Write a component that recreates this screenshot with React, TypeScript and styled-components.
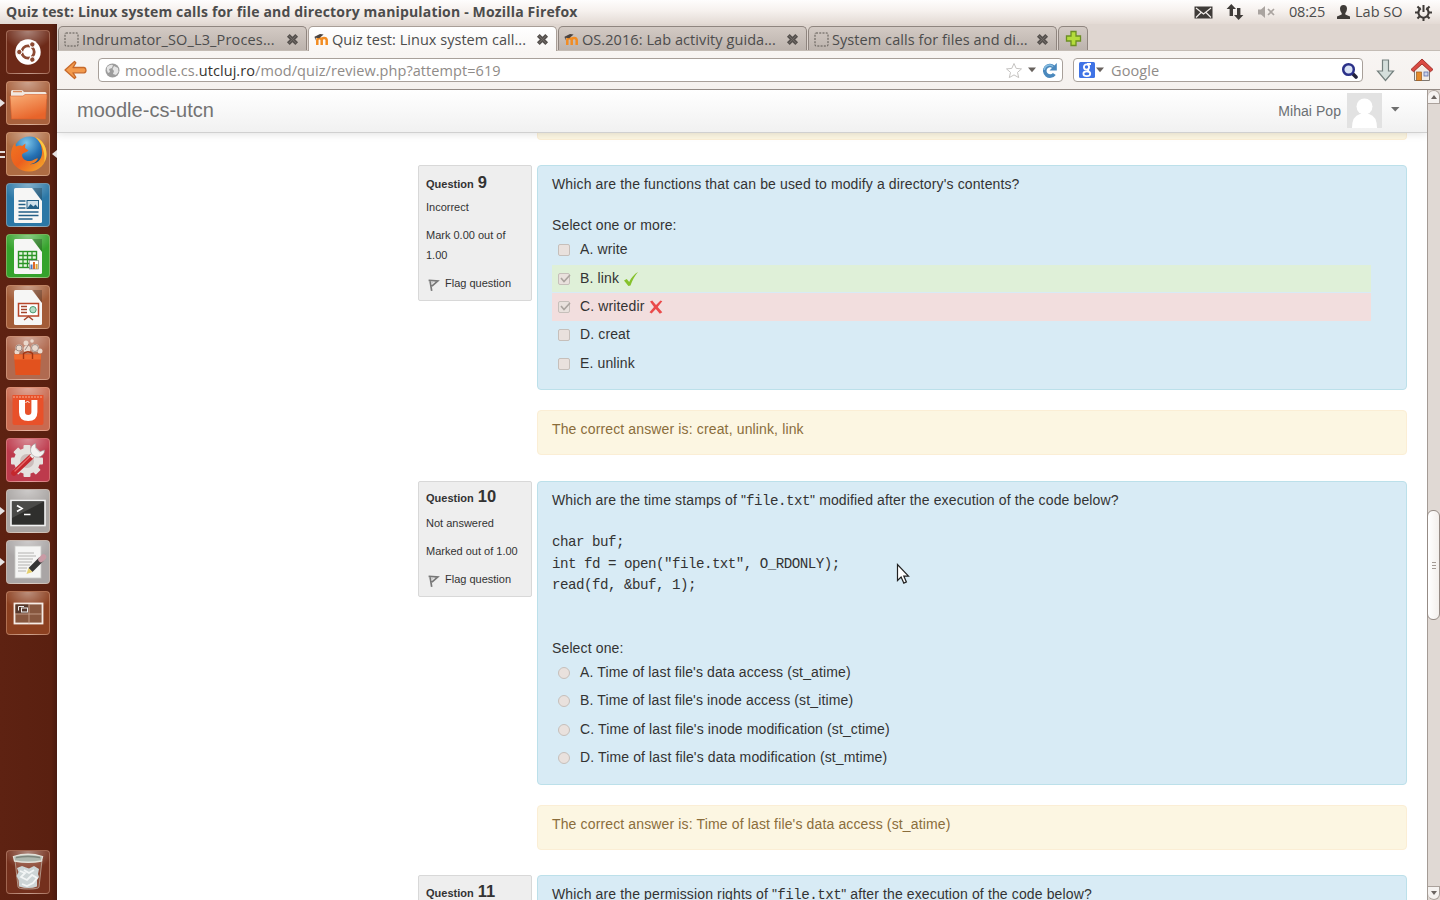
import React from 'react';
import styled, { createGlobalStyle } from 'styled-components';

const GlobalStyle = createGlobalStyle`
  * { box-sizing: border-box; }
  html, body, #root { height: 100%; margin: 0; }
  body { overflow: hidden; background: #fff; color: #333; font-family: "Liberation Sans", Arial, sans-serif; font-size: 14px; }
`;

const Desktop = styled.div`
  position: relative;
  width: 1440px;
  height: 900px;
  display: flex;
  flex-direction: column;
  overflow: hidden;
`;

const UiText = styled.span<{ $ls?: number; $size?: number; $color?: string; $bold?: boolean }>`
  font-family: "Open Sans", "Noto Sans", sans-serif;
  font-size: ${p => p.$size ?? 14.5}px;
  font-weight: ${p => (p.$bold ? 700 : 400)};
  letter-spacing: ${p => p.$ls ?? 0}px;
  color: ${p => p.$color ?? '#4c4c4c'};
  white-space: pre;
  line-height: 20px;
`;

const Panel = styled.header`
  height: 24px;
  flex: none;
  display: flex;
  align-items: center;
  padding: 0 8px 0 6px;
  background: linear-gradient(#fefdfd, #f6f1ee 45%, #e3dad4);
  svg { display: block; }
`;

const Indicators = styled.div`
  margin-left: auto;
  display: flex;
  align-items: center;
`;

const Slot = styled.span<{ $w: number }>`
  width: ${p => p.$w}px;
  display: flex;
  align-items: center;
  flex: none;
`;

const Body = styled.div`
  flex: 1;
  display: flex;
  min-height: 0;
`;

const Launcher = styled.nav`
  width: 57px;
  flex: none;
  display: flex;
  flex-direction: column;
  gap: 7px;
  padding: 6px 0 6px 6px;
  background: linear-gradient(90deg, #5e2212, #5a2010 90%, #4a1a10);
`;

const Tile = styled.div<{ $bg: string; $last?: boolean }>`
  position: relative;
  width: 44px;
  height: 44px;
  flex: none;
  border-radius: 4px;
  border: 1px solid rgba(255, 215, 190, 0.32);
  background: radial-gradient(ellipse 60% 45% at 50% 0, rgba(255,255,255,.42), transparent), ${p => p.$bg};
  margin-top: ${p => (p.$last ? 'auto' : 0)};
  > svg { display: block; width: 42px; height: 42px; }
`;

const Running = styled.i<{ $side: 'left' | 'right' }>`
  position: absolute;
  top: 17px;
  ${p => (p.$side === 'left' ? 'left: -7px; border-left: 5px solid #e6e2e2;' : 'right: -8px; border-right: 5px solid #e6e2e2;')}
  border-top: 4px solid transparent;
  border-bottom: 4px solid transparent;
`;

const TwoRunning = styled.i`
  position: absolute;
  top: 18px;
  left: -7px;
  width: 5px;
  height: 7px;
  border-top: 2px solid #e6dedc;
  border-bottom: 2px solid #e6dedc;
`;

const Browser = styled.div`
  flex: 1;
  min-width: 0;
  display: flex;
  flex-direction: column;
`;

const TabStrip = styled.div`
  height: 27px;
  flex: none;
  display: flex;
  align-items: flex-end;
  gap: 1px;
  padding-left: 1px;
  background: #dfd6d0;
  border-bottom: 1px solid #c4bcb5;
`;

const Tab = styled.div<{ $active?: boolean }>`
  width: 249px;
  height: ${p => (p.$active ? 25 : 24)}px;
  margin-bottom: ${p => (p.$active ? -1 : 0)}px;
  display: flex;
  align-items: center;
  padding: 1px 7px 0 5px;
  border: 1px solid ${p => (p.$active ? '#a89e97' : '#8f857f')};
  border-bottom: 0;
  border-radius: 5px 5px 0 0;
  background: ${p => (p.$active ? 'linear-gradient(#fff, #f8f5f3)' : 'linear-gradient(#d3cac4, #bcb3ad)')};
  svg { flex: none; }
  > svg:last-child { margin-left: auto; }
`;

const TabTitle = styled(UiText)`
  margin: 1px 0 0 3px;
`;

const NewTab = styled(Tab)`
  width: 30px;
  padding: 0 0 0 6px;
  > svg:last-child { margin-left: 0; }
`;

const NavBar = styled.div`
  height: 39px;
  flex: none;
  display: flex;
  align-items: center;
  padding: 0 6px 0 7px;
  background: linear-gradient(#f8f5f3, #f5f1ee);
  border-bottom: 1px solid #948b86;
  svg { display: block; flex: none; }
`;

const Field = styled.div<{ $w: number; $ml: number }>`
  width: ${p => p.$w}px;
  height: 24px;
  margin-left: ${p => p.$ml}px;
  display: flex;
  align-items: center;
  background: #fff;
  border: 1px solid #a8a09a;
  border-radius: 4px;
  padding: 0 4px 0 5px;
  > svg:first-child { margin-top: 1px; }
`;

const FieldText = styled(UiText)`
  margin: 2px 0 0 4px;
`;

const Push = styled.span`
  margin-left: auto;
  display: flex;
  align-items: center;
  gap: 5px;
`;

const Viewport = styled.div`
  flex: 1;
  min-height: 0;
  display: flex;
`;

const Page = styled.main`
  flex: 1;
  min-width: 0;
  display: flex;
  flex-direction: column;
  overflow: hidden;
  background: #fff;
`;

const SiteBar = styled.div`
  position: relative;
  height: 43px;
  flex: none;
  display: flex;
  align-items: center;
  padding: 0 26px 1px 20px;
  background: linear-gradient(#fff, #f1f1f1);
  border-bottom: 1px solid #d0d0d0;
  box-shadow: 0 1px 8px rgba(0, 0, 0, 0.12);
`;

const Brand = styled.span`
  font-size: 20px;
  color: #737373;
  letter-spacing: 0.02px;
`;

const User = styled.span`
  margin-left: auto;
  display: flex;
  align-items: center;
  gap: 6px;
  color: #6b6f73;
  letter-spacing: 0.05px;
  svg { display: block; }
  > svg:last-child { margin: -2px 0 0 1px; }
`;

const Content = styled.div`
  padding: 0 20px 0 361px;
  display: flex;
  flex-direction: column;
`;

const Tail = styled.div`
  height: 7px;
  flex: none;
  margin: 0 0 25px 119px;
  background: #fcf6e2;
  border: 1px solid #fbeed5;
  border-top: 0;
  border-radius: 0 0 4px 4px;
`;

const QuestionRow = styled.section`
  display: grid;
  grid-template-columns: 114px 870px;
  column-gap: 5px;
  align-items: start;
  flex: none;
`;

const Info = styled.aside<{ $h: number }>`
  height: ${p => p.$h}px;
  padding: 7px 7px 0;
  background: #eeeeee;
  border: 1px solid #d8d8d8;
  border-radius: 2px;
  font-size: 11px;
  line-height: 20px;
  white-space: nowrap;
`;

const Number = styled.h3<{ $up: number }>`
  margin: ${p => -p.$up}px 0 ${p => 6 + p.$up}px;
  height: 18px;
  line-height: 18px;
  font-size: 11px;
  b { font-size: 16.5px; margin-left: 1px; }
`;

const InfoLine = styled.div`
  margin-bottom: 7.6px;
  white-space: pre-line;
`;

const Flag = styled.div`
  display: flex;
  align-items: center;
  gap: 5px;
  padding-top: 0.5px;
  svg { display: block; margin: 4px 0 0 1px; }
`;

const Formulation = styled.div<{ $h: number }>`
  height: ${p => p.$h}px;
  padding: 8px 35px 0 14px;
  background: #d8ebf5;
  border: 1px solid #bce0ea;
  border-radius: 4px;
  line-height: 20px;
  letter-spacing: 0.13px;
`;

const Stem = styled.div`
  code { font: 14.2px/20px "Liberation Mono", monospace; letter-spacing: -0.52px; }
`;

const Code = styled.pre`
  margin: 20px 0 41px;
  padding-top: 1px;
  font: 14.2px/21.5px "Liberation Mono", monospace;
  letter-spacing: -0.52px;
`;

const Prompt = styled.div`
  margin-top: 21px;
`;

const Answers = styled.div<{ $pad: number }>`
  padding-top: ${p => p.$pad}px;
`;

const Answer = styled.div<{ $tone?: 'right' | 'wrong' }>`
  height: 27.4px;
  margin-bottom: 1px;
  display: flex;
  align-items: center;
  padding-left: 6px;
  background: ${p => (p.$tone === 'right' ? '#dff0d8' : p.$tone === 'wrong' ? '#f2dede' : 'transparent')};
  span { margin: -2px 4px 0 10px; }
  svg { display: block; }
`;

const Box = styled.i<{ $round?: boolean }>`
  width: 12px;
  height: 12px;
  display: block;
  border: 1px solid #c6bfba;
  border-radius: ${p => (p.$round ? '50%' : '2px')};
  background: #e9e1dd;
  svg { margin: -1px 0 0 0; }
`;

const Outcome = styled.div<{ $gap?: number }>`
  height: 45px;
  flex: none;
  margin: 20px 0 ${p => p.$gap ?? 26}px 119px;
  padding: 8px 14px;
  line-height: 20px;
  letter-spacing: 0.14px;
  color: #8a6d3b;
  background: #fcf6e2;
  border: 1px solid #fbeed5;
  border-radius: 4px;
`;

const Scrollbar = styled.div`
  width: 13px;
  flex: none;
  display: flex;
  flex-direction: column;
  background: #e0d9d4;
  border-left: 1px solid #a49b95;
`;

const ScrollButton = styled.div<{ $h: number; $down?: boolean }>`
  height: ${p => p.$h}px;
  margin-top: ${p => (p.$down ? 'auto' : 0)};
  display: flex;
  align-items: center;
  justify-content: center;
  background: #f5f2f0;
  border: 1px solid #aaa19b;
  border-left: 0;
  border-radius: ${p => (p.$down ? '0 0 6px 6px' : '6px 6px 0 0')};
`;

const Thumb = styled.div`
  height: 110px;
  display: flex;
  flex-direction: column;
  align-items: center;
  justify-content: center;
  gap: 2px;
  margin-top: 406px;
  margin-left: -1px;
  border: 1px solid #958b85;
  border-radius: 6px;
  background: linear-gradient(90deg, #fff, #f3efec);
  i { width: 4px; height: 1px; background: #a39a94; }
`;

const Cursor = styled.svg`
  position: absolute;
  left: 896px;
  top: 563px;
`;

/* ---------- small icons ---------- */

const PageIcon = () => (
  <svg width="15" height="15" viewBox="0 0 15 15"><rect x="1" y="1" width="13" height="13" rx="1" fill="none" stroke="#5b5651" strokeDasharray="2 1.25" /></svg>
);

const MoodleIcon = () => (
  <svg width="15" height="15" viewBox="0 0 15 15">
    <path d="M3.3 13V8.2q0-2 2.2-2t2.2 2V13M7.7 8.2q0-2.2 2.4-2.2t2.6 2.2V13" fill="none" stroke="#f28c22" strokeWidth="2.5" />
    <path d="M.5 4.8 6 2l3.6.6-4.4 3.6-3.4-.5-.3 2.8z" fill="#4a4340" />
  </svg>
);

const CloseIcon = () => (
  <svg width="13" height="13" viewBox="0 0 13 13"><path d="m2.3 2.3 8.4 8.4m0-8.4-8.4 8.4" stroke="#57524f" strokeWidth="3.9" /><path d="m2.5 2.5 8 8m0-8-8 8" stroke="#706a66" strokeWidth="1" /></svg>
);

const Caret = ({ color = '#68625e', w = 8 }) => (
  <svg width={w} height="6" viewBox="0 0 8 6"><path d="M0 .5h8L4 5.3z" fill={color} /></svg>
);

const FlagIcon = () => (
  <svg width="13" height="14" viewBox="0 0 13 14"><path d="m1.600 2.300 9.200.7-5.900 5.200M3 2.600l1.700 10.200" fill="none" stroke="#777" strokeWidth="1.700" /><path d="m4 3.500 3 .3-2.300 2.400z" fill="#c9c9c9" /></svg>
);

const TickIcon = () => (
  <svg width="16" height="16" viewBox="0 0 16 16"><path d="M1 9.600 3.700 8l2.500 3C8.300 6.500 11.200 3.200 15 1c-3.300 3.800-5.700 8.400-7.500 13.600L5.400 15z" fill="#86c22c" /></svg>
);

const CrossIcon = () => (
  <svg width="16" height="16" viewBox="0 0 16 16"><path d="M2 2.500 4.200 1.500 8 6l4.500-4.500 1.800.8L9.700 7.900l4.600 5.300-2.500 1.600L7.800 10l-4.200 4.600-2.100-1.300L6 8z" fill="#ea4a4a" /></svg>
);

/* ---------- launcher drawings ---------- */

const Gear = ({ cx, cy, r, fill }: { cx: number; cy: number; r: number; fill: string }) => (
  <g fill={fill}>
    {[0, 45, 90, 135].map(a => (
      <rect key={a} x={cx - 3.5} y={cy - r - 3} width="7" height={(r + 3) * 2} rx="1" transform={`rotate(${a} ${cx} ${cy})`} />
    ))}
    <circle cx={cx} cy={cy} r={r} />
  </g>
);

const DashIcon = () => (
  <svg viewBox="0 0 42 42">
    <circle cx="21" cy="21" r="12.7" fill="#fff" />
    <circle cx="21" cy="21" r="6.2" fill="none" stroke="#8c4a33" strokeWidth="2.8" />
    {[60, 180, 300].map(a => (
      <g key={a} transform={`rotate(${a} 21 21)`}>
        <path d="M21 21h10" stroke="#fff" strokeWidth="1.2" />
        <circle cx="29.700" cy="21" r="2.700" fill="#8c4a33" stroke="#fff" strokeWidth="1" />
      </g>
    ))}
  </svg>
);

const FilesIcon = () => (
  <svg viewBox="0 0 42 42">
    <defs><linearGradient id="folder" x1="0" y1="0" x2=".5" y2="1"><stop offset="0" stopColor="#f9b078" /><stop offset="1" stopColor="#e8642a" /></linearGradient></defs>
    <path d="M4 9.500q0-1.500 1.500-1.500H15l2 2h21q1.500 0 1.500 1.500V17H4z" fill="#f1e8e0" />
    <path d="M6 9.500h9" stroke="#d98a5b" strokeWidth="1.500" />
    <path d="M3 14h13l2-1.500h22L38.500 37h-34z" fill="url(#folder)" stroke="#d9602c" strokeWidth=".6" />
  </svg>
);

const FirefoxIcon = () => (
  <svg viewBox="0 0 42 42">
    <defs>
      <radialGradient id="globe" cx=".4" cy=".2" r=".9"><stop offset="0" stopColor="#7cc6ea" /><stop offset=".5" stopColor="#2672b4" /><stop offset="1" stopColor="#123463" /></radialGradient>
      <linearGradient id="fox" x1="0" y1="0" x2="1" y2="1"><stop offset="0" stopColor="#f07a22" /><stop offset=".5" stopColor="#ec5f1e" /><stop offset="1" stopColor="#f6b32c" /></linearGradient>
    </defs>
    <circle cx="22.500" cy="19.500" r="16" fill="url(#globe)" />
    <path d="M28 4c7 2.500 11.500 9 11.500 17 0 10-7.500 17.500-17.500 17.500S4 31.500 4 22c0-5 1.500-9 4-12l1 3.500c2-1 4-1.200 6-.6l3.500-2.400-.5 4.500 3.500 2.500c-2 2-5 2-6.500 4 0 4 3 6.500 7 6.500 5 0 6-3 9-2.500-2 4-5 5.500-9 5.500 7 1 13-4 13-11.500C35 12 32 7 28 4z" fill="url(#fox)" />
    <path d="M28 4c7 2.500 11.500 9 11.500 17 0 3-.6 5.500-2 8 .3-7-.5-17-9.500-25z" fill="#f9c843" />
  </svg>
);

const Sheet = ({ children }: { children: React.ReactNode }) => (
  <svg viewBox="0 0 42 42">
    <path d="M26 4h9v14z" fill="rgba(0,0,0,.22)" />
    <path d="M7 5.500Q7 4 8.500 4H25l10 13v20.500q0 1.500-1.500 1.500h-25Q7 39 7 37.500z" fill="#f6f6f5" />
    {children}
  </svg>
);

const WriterIcon = () => (
  <Sheet>
    <path d="M11.500 17h7m-7 3.500h7m-7 3.500h7m-7 4h20m-20 3.500h20m-20 3.500h14" stroke="#245f86" strokeWidth="1.700" />
    <rect x="20" y="16.500" width="11.500" height="8" fill="#cfe0eb" stroke="#245f86" />
    <path d="m20.500 24 3-4 3 2.500 2-2 3 3.500z" fill="#245f86" />
  </Sheet>
);

const CalcIcon = () => (
  <Sheet>
    <rect x="11.500" y="16.500" width="18" height="16" fill="#e8f6e2" stroke="#2b9427" strokeWidth="1.400" />
    <path d="M11.500 20.500h18m-18 4h18m-18 4h18M16 16.500v16m4.500-16v16m4.500-16v16" stroke="#2b9427" strokeWidth="1.300" />
    <rect x="22.500" y="25.500" width="9" height="8.500" fill="#fff" stroke="#888" strokeWidth=".7" />
    <path d="M24.500 34v-4.500" stroke="#4b76b8" strokeWidth="2" /><path d="M27 34v-7" stroke="#e0692a" strokeWidth="2" /><path d="M29.600 34v-5" stroke="#dca334" strokeWidth="2" />
  </Sheet>
);

const ImpressIcon = () => (
  <Sheet>
    <rect x="11.500" y="17.500" width="20" height="12.500" fill="#fff" stroke="#b8462a" strokeWidth="1.500" />
    <path d="M14 20.500h6m-6 3h6m-6 3h6M17 34l4.500-3.500L26 34" fill="none" stroke="#a4452c" strokeWidth="1.500" />
    <circle cx="26" cy="23.700" r="3.200" fill="#b4dcc5" stroke="#4f9b73" />
  </Sheet>
);

const SoftwareIcon = () => (
  <svg viewBox="0 0 42 42">
    <g fill="#ead9cd"><circle cx="12" cy="11" r="3.500" /><circle cx="19" cy="6" r="2.500" /><circle cx="25" cy="4" r="1.800" /><circle cx="28" cy="11" r="4" /><circle cx="33" cy="14" r="2.500" /><circle cx="20" cy="12" r="3.500" /><circle cx="10" cy="15" r="2.500" /></g>
    <g fill="none" stroke="#9d8c86"><circle cx="12" cy="11" r="3" /><circle cx="28" cy="11" r="3.500" /><path d="m18 13 4-6" /></g>
    <path d="M7 17.500h27L33 38H8.500z" fill="#e2521e" /><path d="M7 17.500h27l-.3 5H7.300z" fill="#ef6c31" />
    <path d="M16.500 22v-5.500q4.500-3.500 9 0V22" fill="none" stroke="#a5340f" strokeWidth="1.400" />
  </svg>
);

const UbuntuOneIcon = () => (
  <svg viewBox="0 0 42 42">
    <path d="M5.500 7h31v28q0 2-2 2h-27q-2 0-2-2z" fill="#e8512a" /><path d="M6 9h30" stroke="#f7b095" strokeDasharray="2 1" />
    <path d="M15 12v12q0 6 6.200 6t6.200-6V12" fill="none" stroke="#fff" strokeWidth="6" />
    <path d="m18.500 15 2-2 2 2" fill="none" stroke="#fff" />
  </svg>
);

const SettingsIcon = () => (
  <svg viewBox="0 0 42 42">
    <Gear cx={20} cy={22} r={13} fill="#e5e2df" /><circle cx="20" cy="22" r="7" fill="#cbbdbb" />
    <path d="m7 34 17-16" stroke="#c4272d" strokeWidth="5.500" strokeLinecap="round" />
    <path d="m8 32 15-14.500" stroke="#e86b6a" strokeWidth="1.300" strokeLinecap="round" />
    <path d="m24 18 6-6" stroke="#e9e8e6" strokeWidth="4" />
    <path d="M28.500 4.500a7 7 0 1 0 9 6.500l-5 1.800-3.600-3.500z" fill="#f4f2f0" stroke="#999" strokeWidth=".6" />
  </svg>
);

const TerminalIcon = () => (
  <svg viewBox="0 0 42 42">
    <rect x="4" y="10.500" width="34" height="25" fill="#2f2f2d" stroke="#f2f2f2" strokeWidth="1.600" />
    <path d="M5 11.500h32L5 28z" fill="#4a4a48" />
    <path d="m10 15.500 5 3-5 3M17 24.500h6.500" fill="none" stroke="#fff" strokeWidth="1.700" />
  </svg>
);

const EditorIcon = () => (
  <svg viewBox="0 0 42 42">
    <rect x="8" y="5" width="26" height="32" fill="#f5f5f4" stroke="#c9c8c6" strokeWidth=".8" />
    <path d="M11 12h16m-16 3h18m-18 3h15m-15 3h14m-14 3h12m-12 3h9m-9 3h8" stroke="#b3b2b0" />
    <path d="m23.500 29 11-11" stroke="#353535" strokeWidth="5.500" /><path d="m34 18.500 2.500-2.500" stroke="#c99ba5" strokeWidth="5.500" strokeLinecap="round" />
    <path d="m21.500 27 4 4-6 2z" fill="#e6d06c" />
  </svg>
);

const WorkspaceIcon = () => (
  <svg viewBox="0 0 42 42">
    <rect x="7.500" y="11.500" width="28" height="20" fill="#87573f" stroke="#f5ebe5" strokeWidth="1.800" />
    <rect x="8.500" y="12.500" width="13" height="9" fill="#55382c" />
    <path d="M22 12v19.500M8 22h27" stroke="#c6a08d" strokeWidth=".9" />
    <rect x="14.500" y="16" width="6" height="4" fill="none" stroke="#eee" /><path d="M11.500 18.500v-4H17" fill="none" stroke="#eee" />
  </svg>
);

const TrashIcon = () => (
  <svg viewBox="0 0 42 42">
    <path d="m8 9 3 27q0 2 10.500 2T32 36l3-27z" fill="rgba(190,130,110,.35)" stroke="#bda99c" strokeWidth=".8" />
    <path d="m10 17 5-2 4 1.500 3 1 5-2.500 5 3-1 5 1 3-2 3v6.500q-8 3-18 0l-.5-6.500-2-4 2-4z" fill="#cdd5d6" />
    <path d="m13 20 5 2-4 4 6 3 5-5 5 3-4 5-6 3-5-2m2-14 5 3 5-3" fill="none" stroke="#f2f5f5" strokeWidth="1.800" />
    <path d="M6.500 5.500Q21 1 35.500 5.500L34.500 10q-13 2.500-27 0z" fill="#aeb7ae" stroke="#e3e2da" strokeWidth="1.300" />
    <path d="M9 6.500q12-2 24 0" fill="none" stroke="#7d867d" strokeWidth="1.300" />
  </svg>
);

const launcherItems: { icon: React.FC; bg: string; mark?: 'one' | 'active' }[] = [
  { icon: DashIcon, bg: '#6d2a18' },
  { icon: FilesIcon, bg: '#a8613d', mark: 'one' },
  { icon: FirefoxIcon, bg: '#ae6c43', mark: 'active' },
  { icon: WriterIcon, bg: '#2b77a6' },
  { icon: CalcIcon, bg: '#35a32c' },
  { icon: ImpressIcon, bg: '#a35c38' },
  { icon: SoftwareIcon, bg: '#b06a50' },
  { icon: UbuntuOneIcon, bg: '#c96a50' },
  { icon: SettingsIcon, bg: '#bd3a4c' },
  { icon: TerminalIcon, bg: '#a9a5a3', mark: 'one' },
  { icon: EditorIcon, bg: '#a9a5a5', mark: 'one' },
  { icon: WorkspaceIcon, bg: '#8c4020' },
];

const tabs = [
  { title: 'Indrumator_SO_L3_Proces...', moodle: false, ls: 0.15 },
  { title: 'Quiz test: Linux system call...', moodle: true, active: true, ls: 0.03 },
  { title: 'OS.2016: Lab activity guida...', moodle: true, ls: 0.07 },
  { title: 'System calls for files and di...', moodle: false, ls: 0.07 },
];

type Choice = { label: string; checked?: boolean; tone?: 'right' | 'wrong' };

const multi: Choice[] = [
  { label: 'A. write' },
  { label: 'B. link', checked: true, tone: 'right' },
  { label: 'C. writedir', checked: true, tone: 'wrong' },
  { label: 'D. creat' },
  { label: 'E. unlink' },
];

const single: Choice[] = [
  { label: "A. Time of last file's data access (st_atime)" },
  { label: "B. Time of last file's inode access (st_itime)" },
  { label: "C. Time of last file's inode modification (st_ctime)" },
  { label: "D. Time of last file's data modification (st_mtime)" },
];

const Choices = ({ items, round }: { items: Choice[]; round?: boolean }) => (
  <Answers $pad={round ? 1.8 : 1.6}>
    {items.map(c => (
      <Answer key={c.label} $tone={c.tone}>
        <Box $round={round}>
          {c.checked && <svg width="12" height="11" viewBox="0 0 12 11"><path d="m2 5 3 3.500L11 2" fill="none" stroke="#aaa39e" strokeWidth="1.600" /></svg>}
        </Box>
        <span>{c.label}</span>
        {c.tone === 'right' && <TickIcon />}
        {c.tone === 'wrong' && <CrossIcon />}
      </Answer>
    ))}
  </Answers>
);

const QuestionInfo = ({ n, state, mark, h, up = 1 }: { n: number; state?: string; mark?: string; h: number; up?: number }) => (
  <Info $h={h}>
    <Number $up={up}>Question <b>{n}</b></Number>
    {state && <InfoLine>{state}</InfoLine>}
    {mark && <InfoLine>{mark}</InfoLine>}
    {mark && <Flag><FlagIcon />Flag question</Flag>}
  </Info>
);

export default function App() {
  return (
    <Desktop>
      <GlobalStyle />
      <Panel>
        <UiText $bold $size={14} $ls={0.17}>Quiz test: Linux system calls for file and directory manipulation - Mozilla Firefox</UiText>
        <Indicators>
          <Slot $w={32}><svg width="19" height="13" viewBox="0 0 19 13"><rect x=".5" y=".5" width="18" height="12" fill="#3f3b38" /><path d="m2 2 7.500 6L17 2M2 11.500l5-5m10 5-5-5" fill="none" stroke="#f3eeeb" strokeWidth="1.200" /></svg></Slot>
          <Slot $w={31}><svg width="18" height="16" viewBox="0 0 18 16"><path d="M5.300 0 10 5H7v7H3.600V5H.6zM12.600 16 8 11h3V4h3.400v7h3z" fill="#3f3b38" /></svg></Slot>
          <Slot $w={32}><svg width="18" height="14" viewBox="0 0 18 14"><path d="M1 4.500h3L8 1v12L4 9.500H1z" fill="#aaa4a0" /><path d="m11 4 6 6m0-6-6 6" stroke="#aaa4a0" strokeWidth="1.700" /></svg></Slot>
          <Slot $w={48}><UiText $ls={-0.2}>08:25</UiText></Slot>
          <Slot $w={18}><svg width="13" height="14" viewBox="0 0 13 14"><path d="M3 3.800Q3 0 6.500 0T10 3.800Q10 6.500 8.300 8.200v1.300L13 11.500V14H0v-2.500l4.700-2V8.200Q3 6.500 3 3.800z" fill="#3f3b38" /></svg></Slot>
          <Slot $w={60}><UiText>Lab SO</UiText></Slot>
          <svg width="17" height="17" viewBox="0 0 16 16"><path d="M5.500 4a4.800 4.800 0 1 0 5 0" fill="none" stroke="#3f3b38" strokeWidth="2" /><path d="M8 1v6.500M0 8h3m10 0h3M8 13v3M2.300 2.300l2 2m9.400-2-2 2m-9.400 9.400 2-2m9.400 2-2-2" stroke="#3f3b38" strokeWidth="1.900" /></svg>
        </Indicators>
      </Panel>
      <Body>
        <Launcher>
          {launcherItems.map(({ icon: Icon, bg, mark }, i) => (
            <Tile key={i} $bg={bg}>
              <Icon />
              {mark === 'one' && <Running $side="left" />}
              {mark === 'active' && <><TwoRunning /><Running $side="right" /></>}
            </Tile>
          ))}
          <Tile $bg="#74301d" $last><TrashIcon /></Tile>
        </Launcher>
        <Browser>
          <TabStrip>
            {tabs.map(t => (
              <Tab key={t.title} $active={t.active}>
                {t.moodle ? <MoodleIcon /> : <PageIcon />}
                <TabTitle $ls={t.ls}>{t.title}</TabTitle>
                <CloseIcon />
              </Tab>
            ))}
            <NewTab><svg width="17" height="17" viewBox="0 0 17 17"><path d="M6 1.500h5V6h4.500v5H11v4.500H6V11H1.500V6H6z" fill="#b4dc3c" stroke="#6c8f23" strokeWidth="1.300" /></svg></NewTab>
          </TabStrip>
          <NavBar>
            <svg width="23" height="20" viewBox="0 0 23 20"><path d="M10.500 1.500 1 10l9.500 8.500 1.300-1.200-2.800-4.500H20q2-.3 2-2.600T20 7.500H9l2.800-4.700z" fill="#f39a4c" stroke="#c7692a" strokeWidth="1.300" strokeLinejoin="round" /></svg>
            <Field $w={965} $ml={11}>
              <svg width="17" height="17" viewBox="0 0 17 17"><circle cx="8.500" cy="8.500" r="7" fill="#9c9c9c" /><path d="M3 5q3-3 6-2l-1 3-3 1 1 3-2 1Q2 8 3 5zm7-1 4 2 .5 4-2.500 3-3-1 1-3-1.500-2z" fill="#e4e4e4" /></svg>
              <FieldText $color="#8f8b88" $ls={0.07}>moodle.cs.<UiText $color="#363330" $ls={0.07}>utcluj.ro</UiText>/mod/quiz/review.php?attempt=619</FieldText>
              <Push>
                <svg width="18" height="17" viewBox="0 0 18 17"><path d="m9 1.500 2.200 4.900 5.300.5-4 3.500 1.200 5.200L9 12.900l-4.700 2.700 1.200-5.200-4-3.500 5.300-.5z" fill="#fff" stroke="#c5c3c1" /></svg>
                <Caret />
                <svg width="17" height="17" viewBox="0 0 17 17"><path d="M12.500 4.800A5.300 5.300 0 1 0 13.300 12" fill="none" stroke="#4a88bd" strokeWidth="3.600" /><path d="M15.800 1v7.500H8.500z" fill="#4a88bd" /><path d="M12 4.500A5.300 5.300 0 0 0 3.200 8" fill="none" stroke="#86bce0" strokeWidth="1.500" /></svg>
              </Push>
            </Field>
            <Field $w={290} $ml={10}>
              <Slot $w={17}><svg width="16" height="16" viewBox="0 0 16 16"><rect width="16" height="16" rx="1.500" fill="#3f73e6" /><g fill="none" stroke="#fff" strokeWidth="1.800"><circle cx="7.500" cy="5" r="2.600" /><ellipse cx="7.800" cy="11.700" rx="3.400" ry="2.400" /><path d="M8 2h4M8.500 7.500l1.300 2" /></g></svg></Slot>
              <Slot $w={11}><Caret /></Slot>
              <FieldText $color="#8f8b88" $ls={0.1}>Google</FieldText>
              <Push><svg width="17" height="17" viewBox="0 0 17 17"><path d="m11 11 4 4" stroke="#23233a" strokeWidth="3.600" strokeLinecap="round" /><circle cx="7.500" cy="7.500" r="5.300" fill="#dbe4f5" stroke="#2b3189" strokeWidth="2.500" /></svg></Push>
            </Field>
            <Slot $w={33}><svg width="13" height="1" /><svg width="19" height="23" viewBox="0 0 19 23"><path d="M6.500 1h6v11h5l-8 9.500-8-9.500h5z" fill="#d5dfdc" stroke="#74807e" strokeWidth="1.200" /></svg></Slot>
            <Slot $w={38}><svg width="14" height="1" /><svg width="24" height="24" viewBox="0 0 24 24"><path d="M4.500 11.500V22.500h15v-11L12 5z" fill="#f2ede6" stroke="#7f7872" /><rect x="6.500" y="14" width="5" height="8.500" fill="#e58a28" stroke="#9b5a1e" strokeWidth=".7" /><rect x="14" y="14" width="4" height="4" fill="#c9d3ea" stroke="#5f6fa8" strokeWidth=".8" /><path d="m12 1 11 10.500-2.500 2.200L12 6l-8.500 7.700L1 11.500z" fill="#da4a42" stroke="#9c2a25" strokeWidth=".9" /></svg></Slot>
          </NavBar>
          <Viewport>
            <Page>
              <SiteBar>
                <Brand>moodle-cs-utcn</Brand>
                <User>
                  <span>Mihai Pop</span>
                  <svg width="35" height="35" viewBox="0 0 35 35"><rect width="35" height="35" fill="#e2e2e2" /><circle cx="17.500" cy="13.500" r="8" fill="#fff" /><path d="M5 35q0-12 8-14h9q8 2 8 14z" fill="#fff" /></svg>
                  <svg width="12" height="8" viewBox="0 0 12 8"><path d="M2 1h8.500L6.200 5.500z" fill="#6e6e6e" /></svg>
                </User>
              </SiteBar>
              <Content>
                <Tail />
                <QuestionRow>
                  <QuestionInfo n={9} state="Incorrect" mark={'Mark 0.00 out of\n1.00'} h={136} up={0.5} />
                  <Formulation $h={225}>
                    <Stem>Which are the functions that can be used to modify a directory's contents?</Stem>
                    <Prompt>Select one or more:</Prompt>
                    <Choices items={multi} />
                  </Formulation>
                </QuestionRow>
                <Outcome>The correct answer is: creat, unlink, link</Outcome>
                <QuestionRow>
                  <QuestionInfo n={10} state="Not answered" mark="Marked out of 1.00" h={116} up={2} />
                  <Formulation $h={304}>
                    <Stem>Which are the time stamps of "<code>file.txt</code>" modified after the execution of the code below?</Stem>
                    <Code>{'char buf;\nint fd = open("file.txt", O_RDONLY);\nread(fd, &buf, 1);'}</Code>
                    <Prompt>Select one:</Prompt>
                    <Choices items={single} round />
                  </Formulation>
                </QuestionRow>
                <Outcome $gap={25}>The correct answer is: Time of last file's data access (st_atime)</Outcome>
                <QuestionRow>
                  <QuestionInfo n={11} h={116} up={1} />
                  <Formulation $h={304}>
                    <Stem>Which are the permission rights of "<code>file.txt</code>" after the execution of the code below?</Stem>
                  </Formulation>
                </QuestionRow>
              </Content>
            </Page>
            <Scrollbar>
              <ScrollButton $h={14}><svg width="6" height="4" viewBox="0 0 6 4"><path d="M0 4h6L3 0z" fill="#6a6460" /></svg></ScrollButton>
              <Thumb><i /><i /><i /></Thumb>
              <ScrollButton $h={14} $down><svg width="6" height="4" viewBox="0 0 6 4"><path d="M0 0h6L3 4z" fill="#6a6460" /></svg></ScrollButton>
            </Scrollbar>
          </Viewport>
        </Browser>
      </Body>
      <Cursor width="14" height="22" viewBox="0 0 14 22"><path d="M1.500 1.500v16l3.600-3.400 2.700 6 2.600-1.200-2.600-5.800h4.700z" fill="#fff" stroke="#222" strokeWidth="1.200" /></Cursor>
    </Desktop>
  );
}
